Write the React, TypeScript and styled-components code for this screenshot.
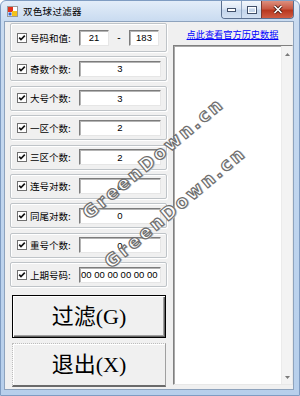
import React from 'react'
import styled, { createGlobalStyle } from 'styled-components'

const CJK = `"Noto Sans CJK SC", "Noto Sans", sans-serif`

const GlobalStyle = createGlobalStyle`
	html, body {
		margin: 0;
		padding: 0;
		background: #ffffff;
	}
	body {
		width: 300px;
		height: 396px;
		overflow: hidden;
	}
`

type Row = { label: string; value: string; align?: 'left' }

const rows: Row[] = [
	{ label: '奇数个数:', value: '3' },
	{ label: '大号个数:', value: '3' },
	{ label: '一区个数:', value: '2' },
	{ label: '三区个数:', value: '2' },
	{ label: '连号对数:', value: '0' },
	{ label: '同尾对数:', value: '0' },
	{ label: '重号个数:', value: '0' },
	{ label: '上期号码:', value: '00 00 00 00 00 00', align: 'left' },
]

const AppIcon = () => (
	<svg width="11" height="11" viewBox="0 0 11 11">
		<rect x="0.5" y="0.5" width="10" height="10" fill="#fff" stroke="#9a9a9a" />
		<rect x="1" y="1" width="5" height="5" fill="#e2321c" />
		<rect x="5" y="5" width="5" height="5" fill="#f3c21d" />
		<rect x="1.5" y="6.5" width="3" height="3" fill="#2f62d4" />
	</svg>
)

const CheckMark = () => (
	<svg width="10" height="10" viewBox="0 0 10 10">
		<rect x="0.5" y="0.5" width="9" height="9" fill="#fff" stroke="#707070" />
		<path d="M2.2 4.6 L4 6.6 L7.8 2.6" fill="none" stroke="#111" strokeWidth="1.6" />
	</svg>
)

const Window: React.FC = () => (
	<Frame>
		<TitleBar>
			<AppIcon />
			<Title>双色球过滤器</Title>
			<Caption>
				<CapButton $w={19}>
					<svg width="9" height="4" viewBox="0 0 9 4">
						<rect x="0.5" y="0.5" width="8" height="3" fill="#fff" stroke="#41506a" />
					</svg>
				</CapButton>
				<CapButton $w={19}>
					<svg width="10" height="8" viewBox="0 0 10 8">
						<rect x="0.5" y="0.5" width="9" height="7" fill="none" stroke="#41506a" />
						<rect x="1.5" y="1.5" width="7" height="5" fill="none" stroke="#fff" />
						<rect x="2.5" y="3" width="5" height="3" fill="#c6d6ea" />
					</svg>
				</CapButton>
				<CapButton $w={31} $close>
					<svg width="10" height="9" viewBox="0 0 10 9">
						<path d="M1.5 1 L8.5 8 M8.5 1 L1.5 8" stroke="#4a1a12" strokeWidth="3.2" />
						<path d="M1.5 1 L8.5 8 M8.5 1 L1.5 8" stroke="#fff" strokeWidth="1.6" />
					</svg>
				</CapButton>
			</Caption>
		</TitleBar>

		<Client>
			<LeftColumn>
				<Group $tall>
					<CheckMark />
					<Label>号码和值:</Label>
					<Field $w={30}>21</Field>
					<Dash>-</Dash>
					<Field $w={30}>183</Field>
				</Group>
				{rows.map((row) => (
					<Group key={row.label}>
						<CheckMark />
						<Label>{row.label}</Label>
						<Field $w={82} $align={row.align}>{row.value}</Field>
					</Group>
				))}
				<BigButton $default>过滤(G)</BigButton>
				<BigButton>退出(X)</BigButton>
			</LeftColumn>

			<RightColumn>
				<LinkRow>
					<HistoryLink href="#">点此查看官方历史数据</HistoryLink>
				</LinkRow>
				<ListBox>
					<ListArea />
					<ScrollTrack>
						<svg width="5" height="3" viewBox="0 0 5 3">
							<path d="M0 3 L2.5 0 L5 3 Z" fill="#7a7a7a" />
						</svg>
						<svg width="5" height="3" viewBox="0 0 5 3">
							<path d="M0 0 L2.5 3 L5 0 Z" fill="#7a7a7a" />
						</svg>
					</ScrollTrack>
				</ListBox>
			</RightColumn>
		</Client>

		{/* site watermark baked into the screenshot */}
		<Watermark style={{ left: 152, top: 157 }}>GreenDown.cn</Watermark>
		<Watermark style={{ left: 174, top: 206 }}>GreenDown.cn</Watermark>
	</Frame>
)

const App: React.FC = () => (
	<>
		<GlobalStyle />
		<Window />
	</>
)

const Frame = styled.div`
	position: relative;
	width: 300px;
	height: 396px;
	box-sizing: border-box;
	display: flex;
	flex-direction: column;
	padding: 0 5px 5px 3px;
	background: linear-gradient(180deg, #e3edf9 0px, #c9dbf0 20px, #bed4ee 60%, #b7cfeb 100%);
	border: 1px solid #7f9cc2;
	border-radius: 6px 6px 0 0;
	overflow: hidden;
`

const TitleBar = styled.div`
	height: 20px;
	flex: none;
	display: flex;
	align-items: center;
	padding-left: 3px;
`

const Title = styled.span`
	margin-left: 5px;
	font: 9.5px ${CJK};
	color: #000;
	letter-spacing: 0.3px;
`

const Caption = styled.div`
	margin-left: auto;
	align-self: flex-start;
	display: flex;
	height: 17px;
	border: 1px solid #5a6f8f;
	border-top: none;
	border-radius: 0 0 4px 4px;
	overflow: hidden;
`

const CapButton = styled.div<{ $w: number; $close?: boolean }>`
	width: ${(p) => p.$w}px;
	display: flex;
	align-items: center;
	justify-content: center;
	border-left: ${(p) => (p.$close ? '1px solid #7a3a30' : '1px solid #8fa4c0')};
	background: ${(p) =>
		p.$close
			? 'linear-gradient(180deg, #dc8f7e 0%, #c95a44 45%, #b9381f 55%, #cf5c43 100%)'
			: 'linear-gradient(180deg, #f3f7fc 0%, #dbe6f4 45%, #c4d5ec 55%, #d3e1f2 100%)'};
	&:first-child {
		border-left: none;
	}
`

const Client = styled.div`
	flex: 1;
	display: flex;
	border: 1px solid #8ea3bd;
	background: #f0f0f0;
	min-height: 0;
`

const LeftColumn = styled.div`
	width: 165px;
	box-sizing: border-box;
	padding: 1px 0 0 5px;
	display: flex;
	flex-direction: column;
`

const Group = styled.div<{ $tall?: boolean }>`
	box-sizing: border-box;
	width: 157px;
	height: ${(p) => (p.$tall ? 29 : 25)}px;
	flex: none;
	display: flex;
	align-items: center;
	padding: 0 5px 0 6px;
	border: 1px solid #bfc4c8;
	border-radius: 2px;
	box-shadow: inset 1px 1px 0 #ffffff, 1px 1px 0 #ffffff;
	& + & {
		margin-top: ${(p) => (p.$tall ? 4 : 4.4)}px;
	}
	svg {
		flex: none;
	}
`

const Label = styled.span`
	width: 49px;
	margin-left: 3px;
	flex: none;
	font: 9.5px ${CJK};
	color: #000;
	white-space: nowrap;
`

const Field = styled.div<{ $w: number; $align?: 'left' }>`
	box-sizing: border-box;
	width: ${(p) => p.$w}px;
	height: 16px;
	flex: none;
	display: flex;
	align-items: center;
	justify-content: ${(p) => (p.$align === 'left' ? 'flex-start' : 'center')};
	padding-left: ${(p) => (p.$align === 'left' ? 1 : 0)}px;
	border: 1px solid;
	border-color: #7c7c7c #e6e6e6 #e6e6e6 #7c7c7c;
	box-shadow: inset 1px 1px 0 #b4b4b4;
	background: #ffffff;
	font: 9.5px "Liberation Sans", Arial, sans-serif;
	color: #000;
	white-space: nowrap;
	overflow: hidden;
`

const Dash = styled.span`
	width: 20px;
	flex: none;
	text-align: center;
	font: 10px "Liberation Sans", Arial, sans-serif;
	color: #000;
`

const BigButton = styled.div<{ $default?: boolean }>`
	box-sizing: border-box;
	width: 154px;
	height: ${(p) => (p.$default ? 43 : 44)}px;
	margin: ${(p) => (p.$default ? '7.8px 0 0 2px' : '5px 0 0 2px')};
	flex: none;
	display: flex;
	align-items: center;
	justify-content: center;
	padding-bottom: 4px;
	background: #f0f0f0;
	font: 22px "Liberation Serif", ${CJK};
	color: #000;
	${(p) =>
		p.$default
			? `
		border: 1px solid #000;
		box-shadow: inset 1px 1px 0 #ffffff, inset -1px -1px 0 #646464, inset -2px -2px 0 #a0a0a0;
	`
			: `
		border-style: dotted solid solid dotted;
		border-width: 1px 1px 2px 1px;
		border-color: #bdbdbd #a0a0a0 #6a6a6a #bdbdbd;
		box-shadow: inset 1px 1px 0 #ffffff;
	`}
`

const RightColumn = styled.div`
	flex: 1;
	padding-left: 3px;
	display: flex;
	flex-direction: column;
`

const LinkRow = styled.div`
	height: 23px;
	display: flex;
	align-items: center;
	justify-content: center;
	padding-right: 1px;
`

const HistoryLink = styled.a`
	font: 9.2px ${CJK};
	color: #0000ff;
	text-decoration: underline;
`

const ListBox = styled.div`
	box-sizing: border-box;
	width: 120px;
	height: 340px;
	display: flex;
	border: 1px solid;
	border-color: #808080 #e8e8e8 #e8e8e8 #808080;
	box-shadow: inset 1px 1px 0 #a9a9a9;
	background: #ffffff;
`

const ListArea = styled.div`
	flex: 1;
`

const ScrollTrack = styled.div`
	width: 10px;
	display: flex;
	flex-direction: column;
	align-items: center;
	justify-content: space-between;
	padding: 7px 0 5px;
	background: #f3f3f3;
	border-left: 1px solid #ebebeb;
`

const Watermark = styled.span`
	position: absolute;
	transform: translate(-50%, -50%) rotate(-40deg);
	font: bold 18px "DejaVu Sans", sans-serif;
	letter-spacing: 2.5px;
	color: #ffffff;
	-webkit-text-stroke: 1.2px #6e6e6e;
	text-shadow: 1px 1px 0 #c8c8c8;
	white-space: nowrap;
	pointer-events: none;
`

export default App
